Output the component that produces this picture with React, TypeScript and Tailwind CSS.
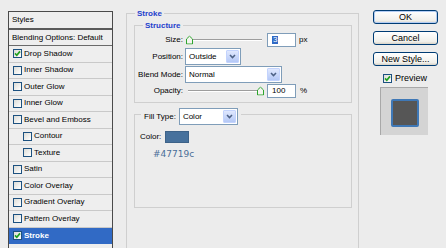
const effects = [
  { label: "Drop Shadow", checked: true },
  { label: "Inner Shadow" },
  { label: "Outer Glow" },
  { label: "Inner Glow" },
  { label: "Bevel and Emboss" },
  { label: "Contour", sub: true },
  { label: "Texture", sub: true },
  { label: "Satin" },
  { label: "Color Overlay" },
  { label: "Gradient Overlay" },
  { label: "Pattern Overlay" },
  { label: "Stroke", checked: true, active: true },
];

function Check({ checked }: { checked?: boolean }) {
  return (
    <span className="flex h-[9px] w-[9px] shrink-0 items-center justify-center border border-[#1c5180] bg-[linear-gradient(135deg,#dcdcd7,#ffffff)]">
      {checked && (
        <svg viewBox="0 0 7 7" className="h-[7px] w-[7px]">
          <path d="M1 3.4 L2.8 5.3 L6 1.4" stroke="#21a121" strokeWidth="1.7" fill="none" />
        </svg>
      )}
    </span>
  );
}

function Select({ value, width }: { value: string; width: string }) {
  return (
    <div className={"flex items-stretch border border-[#7f9db9] bg-white " + width}>
      <span className="flex flex-1 items-center pl-[3px]">{value}</span>
      <span className="m-[1px] flex w-[13px] items-center justify-center rounded-[1px] border border-[#c3d3fd] bg-[linear-gradient(#e0e8fe,#b4c8f6)]">
        <svg viewBox="0 0 7 5" className="h-[5px] w-[7px]">
          <path d="M1 1 L3.5 3.6 L6 1" stroke="#4d6185" strokeWidth="1.5" fill="none" />
        </svg>
      </span>
    </div>
  );
}

function Slider({ at }: { at: "start" | "end" }) {
  return (
    <div className="relative h-full w-[79px]">
      <span className="absolute left-[3px] right-[2px] top-1/2 h-[2px] -translate-y-1/2 border-t border-[#9d9d9d] bg-white" />
      <svg
        viewBox="0 0 7 9"
        className={
          at === "start"
            ? "absolute left-[1px] top-1/2 h-[9px] w-[7px] -translate-y-1/2"
            : "absolute right-[0px] top-1/2 h-[9px] w-[7px] -translate-y-1/2"
        }
      >
        <path d="M0.5 8.5 V3.5 L3.5 0.6 L6.5 3.5 V8.5 Z" fill="#f4f4f0" stroke="#2ea52e" strokeWidth="1" />
      </svg>
    </div>
  );
}

function NumBox({ children }: { children: React.ReactNode }) {
  return (
    <div className="ml-[3px] flex h-[14px] w-[29px] items-center border border-[#7f9db9] bg-white pl-[4px]">
      {children}
    </div>
  );
}

function Button({ label, main }: { label: string; main?: boolean }) {
  return (
    <button
      className={
        main
          ? "flex h-[14px] w-[65px] items-center justify-center rounded-[3px] border border-[#003c74] bg-[linear-gradient(#ffffff,#f0efea_80%,#d8d2c6)] text-[9px] shadow-[inset_0_0_0_1px_#b4cdf3]"
          : "flex h-[14px] w-[65px] items-center justify-center rounded-[3px] border border-[#003c74] bg-[linear-gradient(#ffffff,#f0efea_80%,#d8d2c6)] text-[9px]"
      }
    >
      {label}
    </button>
  );
}

export default function App() {
  return (
    <div className="flex h-[248px] w-[446px] items-start overflow-hidden bg-[#ececec] font-['Liberation_Sans',Arial,sans-serif] text-[8px] leading-none text-black">
      {/* styles list */}
      <div className="ml-[8px] mt-[11px] w-[105px] shrink-0 border-x border-t border-[#4a4a4a] bg-[#eeeeee]">
        <div className="flex h-[18px] items-center border-b-2 border-[#5a5a5a] pl-[3px]">Styles</div>
        <div className="flex h-[16px] items-center border-b border-[#6a6a6a] pl-[3px]">Blending Options: Default</div>
        {effects.map((e) => (
          <div
            key={e.label}
            className={
              e.active
                ? "flex h-[16.5px] items-center gap-[2px] bg-[#316ac5] pl-[4px] font-bold text-white"
                : e.sub
                  ? "flex h-[16.5px] items-center gap-[2px] border-b border-[#c9c9c9] pl-[14px]"
                  : "flex h-[16.5px] items-center gap-[2px] border-b border-[#c9c9c9] pl-[4px]"
            }
          >
            <Check checked={e.checked} />
            <span>{e.label}</span>
          </div>
        ))}
        <div className="h-[16px]" />
      </div>

      {/* stroke group */}
      <div className="relative ml-[13px] mt-[13px] h-[260px] w-[233px] shrink-0 border border-[#cfcfcf] pl-[7px] pr-[6px] pt-[11px]">
        <span className="absolute -top-[6px] left-[8px] bg-[#ececec] px-[2px] leading-[11px] font-bold text-[#1f3fcc]">
          Stroke
        </span>

        <div className="relative h-[78px] border border-[#cfcfcf] pt-[6px]">
          <span className="absolute -top-[6px] left-[8px] bg-[#ececec] px-[2px] leading-[11px] font-bold text-[#1f3fcc]">
            Structure
          </span>
          <div className="flex h-[15px] items-center">
            <span className="w-[48px] text-right">Size:</span>
            <div className="ml-[2px] flex h-full items-center">
              <Slider at="start" />
              <NumBox>
                <span className="bg-[#316ac5] px-[1px] text-white">3</span>
              </NumBox>
              <span className="ml-[3px]">px</span>
            </div>
          </div>
          <div className="mt-[1px] flex h-[17px] items-stretch">
            <span className="flex w-[48px] items-center justify-end">Position:</span>
            <div className="ml-[2px] flex">
              <Select value="Outside" width="w-[56px]" />
            </div>
          </div>
          <div className="mt-[1px] flex h-[17px] items-stretch">
            <span className="flex w-[48px] items-center justify-end">Blend Mode:</span>
            <div className="ml-[2px] flex">
              <Select value="Normal" width="w-[97px]" />
            </div>
          </div>
          <div className="mt-[1px] flex h-[14px] items-center">
            <span className="w-[48px] text-right">Opacity:</span>
            <div className="ml-[2px] flex h-full items-center">
              <Slider at="end" />
              <NumBox>100</NumBox>
              <span className="ml-[4px]">%</span>
            </div>
          </div>
        </div>

        <div className="relative mt-[11px] h-[94px] border border-[#cfcfcf] pl-[5px] pt-[16px]">
          <div className="absolute -top-[7px] left-[6px] flex h-[17px] items-center gap-[3px] bg-[#ececec] px-[3px]">
            <span>Fill Type:</span>
            <Select value="Color" width="h-[17px] w-[59px]" />
          </div>
          <div className="flex h-[12px] items-center">
            <span>Color:</span>
            <span className="ml-[4px] h-[12px] w-[24px] border border-[#3d6288] bg-[#47719c]" />
          </div>
          <div className="ml-[13px] mt-[5px] font-['DejaVu_Sans',sans-serif] text-[9px] leading-[12px] text-[#4a6e98]">
            #47719c
          </div>
        </div>
      </div>

      {/* buttons */}
      <div className="ml-[14px] mt-[10px] flex w-[65px] shrink-0 flex-col">
        <Button label="OK" main />
        <div className="mt-[7px]">
          <Button label="Cancel" />
        </div>
        <div className="mt-[7px]">
          <Button label="New Style..." />
        </div>
        <div className="mt-[7px] flex h-[10px] items-center gap-[3px] pl-[10px] text-[9px]">
          <Check checked />
          <span>Preview</span>
        </div>
        <div className="ml-[7px] mt-[4px] h-[48px] w-[48px] border-l border-t border-[#a8a8a8] bg-[#d4d4d4] pl-[10px] pt-[11px]">
          <div className="h-[28px] w-[28px] rounded-[2px] border-2 border-[#3f78b6] bg-[#565656]" />
        </div>
      </div>
    </div>
  );
}
